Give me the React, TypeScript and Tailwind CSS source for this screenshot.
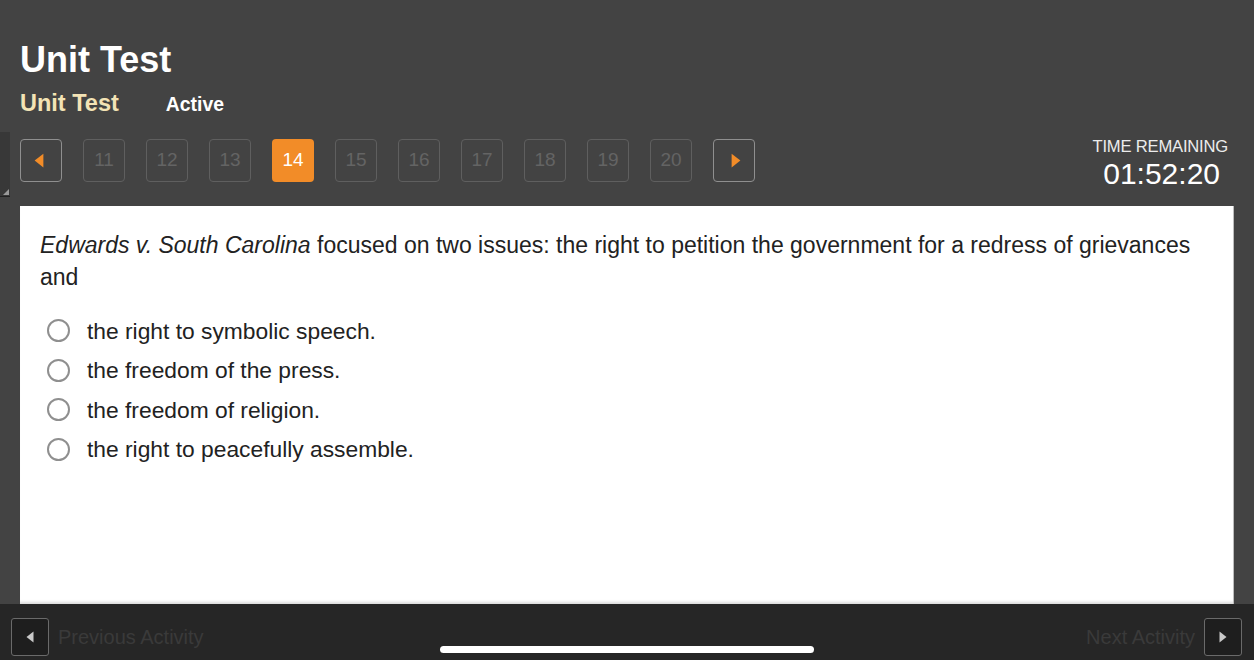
import * as React from 'react';

const pages = [11, 12, 13, 14, 15, 16, 17, 18, 19, 20];
const current = 14;

const choices = [
  'the right to symbolic speech.',
  'the freedom of the press.',
  'the freedom of religion.',
  'the right to peacefully assemble.',
];

function Triangle({ dir, color, w = 8, h = 12 }: { dir: 'left' | 'right'; color: string; w?: number; h?: number }) {
  return (
    <svg width={w} height={h} viewBox="0 0 8 12" preserveAspectRatio="none">
      {dir === 'left' ? (
        <path d="M7.5 0.5 L7.5 11.5 L0.5 6 Z" fill={color} />
      ) : (
        <path d="M0.5 0.5 L0.5 11.5 L7.5 6 Z" fill={color} />
      )}
    </svg>
  );
}

export default function App() {
  const [selected, setSelected] = React.useState<number | null>(null);

  return (
    <div
      className="relative w-[1254px] h-[660px] overflow-hidden bg-[#434343] flex flex-col"
      style={{ fontFamily: '"Liberation Sans", Arial, sans-serif' }}
    >
      {/* resize grip at left edge */}
      <div className="absolute left-0 top-[132px] w-[10px] h-[65px] bg-[#383838] border-b border-[#222]">
        <div className="absolute right-[1px] bottom-[1px] w-0 h-0 border-l-[6px] border-l-transparent border-b-[6px] border-b-[#9a9a9a]" />
      </div>

      {/* Header */}
      <div className="px-[20px] pt-[40px]">
        <h1 className="text-[36px] font-bold text-white leading-[40px]">Unit Test</h1>
        <div className="flex items-baseline gap-[47px] mt-[8px]">
          <span className="text-[23.5px] font-bold text-[#f3e3b5] leading-[30px]">Unit Test</span>
          <span className="text-[19.4px] font-bold text-white">Active</span>
        </div>
      </div>

      {/* Navigation row */}
      <div className="flex items-start justify-between pl-[20px] pr-[26px] mt-[20px]">
        <div className="flex gap-[21px]">
          <button className="w-[42px] h-[43px] rounded-[4px] border-[1.5px] border-[#8f8f8f] flex items-center justify-center pr-[4px]">
            <Triangle dir="left" color="#f28c28" w={10} h={15} />
          </button>
          {pages.map((p) =>
            p === current ? (
              <button
                key={p}
                className="w-[42px] h-[43px] rounded-[4px] bg-[#f28c28] text-white text-[19px] flex items-center justify-center"
              >
                {p}
              </button>
            ) : (
              <button
                key={p}
                className="w-[42px] h-[43px] rounded-[4px] border border-[#5f5f5f] text-[#646464] text-[19px] flex items-center justify-center"
              >
                {p}
              </button>
            )
          )}
          <button className="w-[42px] h-[43px] rounded-[4px] border-[1.5px] border-[#8f8f8f] flex items-center justify-center pl-[4px]">
            <Triangle dir="right" color="#f28c28" w={10} h={15} />
          </button>
        </div>
        <div className="flex flex-col items-end -mt-[2px]">
          <span className="text-[16.6px] text-[#ececec] leading-[20px] tracking-[-0.2px]">TIME REMAINING</span>
          <span className="text-[30px] text-white leading-[34px] pr-[8px]">01:52:20</span>
        </div>
      </div>

      {/* Question panel */}
      <div className="mx-[20px] mt-[15px] flex-1 bg-white border-r border-[#bdbdbd] shadow-[inset_0_-4px_3px_-2px_rgba(0,0,0,0.15)] px-[20px] pt-[23px]">
        <p className="text-[23px] leading-[32px] text-[#222]">
          <i>Edwards v. South Carolina</i> focused on two issues: the right to petition the government for a redress of
          grievances and
        </p>
        <div className="mt-[18px] flex flex-col">
          {choices.map((c, i) => (
            <label key={c} className="flex items-center gap-[17px] pl-[7px] cursor-pointer h-[39.5px]">
              <span
                onClick={() => setSelected(i)}
                className="w-[23px] h-[23px] rounded-full border-2 border-[#8f8f8f] flex items-center justify-center"
              >
                {selected === i && <span className="w-[11px] h-[11px] rounded-full bg-[#555]" />}
              </span>
              <span className="text-[22.8px] text-[#222]">{c}</span>
            </label>
          ))}
        </div>
      </div>

      {/* Footer */}
      <div className="h-[56px] bg-[#262626] flex items-center justify-between px-[11px] pt-[10px]">
        <div className="flex items-center gap-[9px]">
          <button className="w-[38px] h-[38px] rounded-[3px] border border-[#6a6a6a] bg-[#1e1e1e] flex items-center justify-center">
            <Triangle dir="left" color="#c9c9c9" />
          </button>
          <span className="text-[20px] text-[#3a3a3a]">Previous Activity</span>
        </div>
        <div className="flex items-center gap-[9px] pr-[1px]">
          <span className="text-[20px] text-[#3a3a3a]">Next Activity</span>
          <button className="w-[38px] h-[38px] rounded-[3px] border border-[#6a6a6a] bg-[#1e1e1e] flex items-center justify-center">
            <Triangle dir="right" color="#c9c9c9" />
          </button>
        </div>
      </div>

      {/* home indicator */}
      <div className="absolute left-[440px] bottom-[7px] w-[374px] h-[7px] rounded-full bg-white" />
    </div>
  );
}
